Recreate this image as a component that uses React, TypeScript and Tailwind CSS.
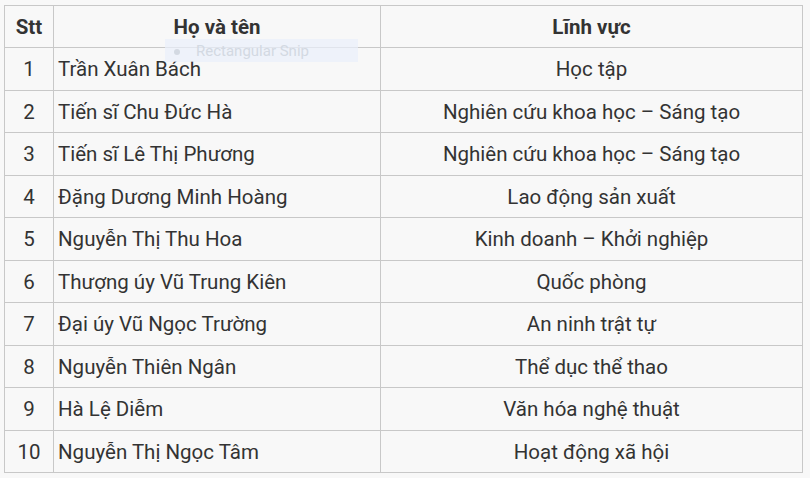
const rows = [
  ["1", "Trần Xuân Bách", "Học tập"],
  ["2", "Tiến sĩ Chu Đức Hà", "Nghiên cứu khoa học – Sáng tạo"],
  ["3", "Tiến sĩ Lê Thị Phương", "Nghiên cứu khoa học – Sáng tạo"],
  ["4", "Đặng Dương Minh Hoàng", "Lao động sản xuất"],
  ["5", "Nguyễn Thị Thu Hoa", "Kinh doanh – Khởi nghiệp"],
  ["6", "Thượng úy Vũ Trung Kiên", "Quốc phòng"],
  ["7", "Đại úy Vũ Ngọc Trường", "An ninh trật tự"],
  ["8", "Nguyễn Thiên Ngân", "Thể dục thể thao"],
  ["9", "Hà Lệ Diễm", "Văn hóa nghệ thuật"],
  ["10", "Nguyễn Thị Ngọc Tâm", "Hoạt động xã hội"],
]

export default function App() {
  return (
    <div className="relative w-[810px] h-[478px] bg-[#f8f8f8] pt-[5px] pl-[4px] font-['Roboto',sans-serif] text-[#333333] text-[20.5px]">
      <table className="border-collapse table-fixed w-[798px]">
        <colgroup>
          <col className="w-[49px]" />
          <col className="w-[327px]" />
          <col className="w-[422px]" />
        </colgroup>
        <thead>
          <tr className="h-[42px]">
            <th className="border border-[#c8c8c8] pt-[2px] font-bold text-center">Stt</th>
            <th className="border border-[#c8c8c8] pt-[2px] font-bold text-center">Họ và tên</th>
            <th className="border border-[#c8c8c8] pt-[2px] font-bold text-center">Lĩnh vực</th>
          </tr>
        </thead>
        <tbody>
          {rows.map((r) => (
            <tr key={r[0]} className="h-[42.5px]">
              <td className="border border-[#c8c8c8] pt-[2px] text-center">{r[0]}</td>
              <td className="border border-[#c8c8c8] pt-[2px] pl-[4px]">{r[1]}</td>
              <td className="border border-[#c8c8c8] pt-[2px] text-center">{r[2]}</td>
            </tr>
          ))}
        </tbody>
      </table>

      {/* faint snipping tool tooltip left in the capture */}
      <div className="absolute left-[165px] top-[39px] w-[193px] h-[23px] bg-[#e9f0fb]/70 flex items-center gap-[16px] pl-[9px] pt-[2px] text-[15px] text-[#d3d9e2]">
        <span className="w-[6px] h-[6px] rounded-full bg-[#d3d9e2]" />
        <span>Rectangular Snip</span>
      </div>
    </div>
  )
}
